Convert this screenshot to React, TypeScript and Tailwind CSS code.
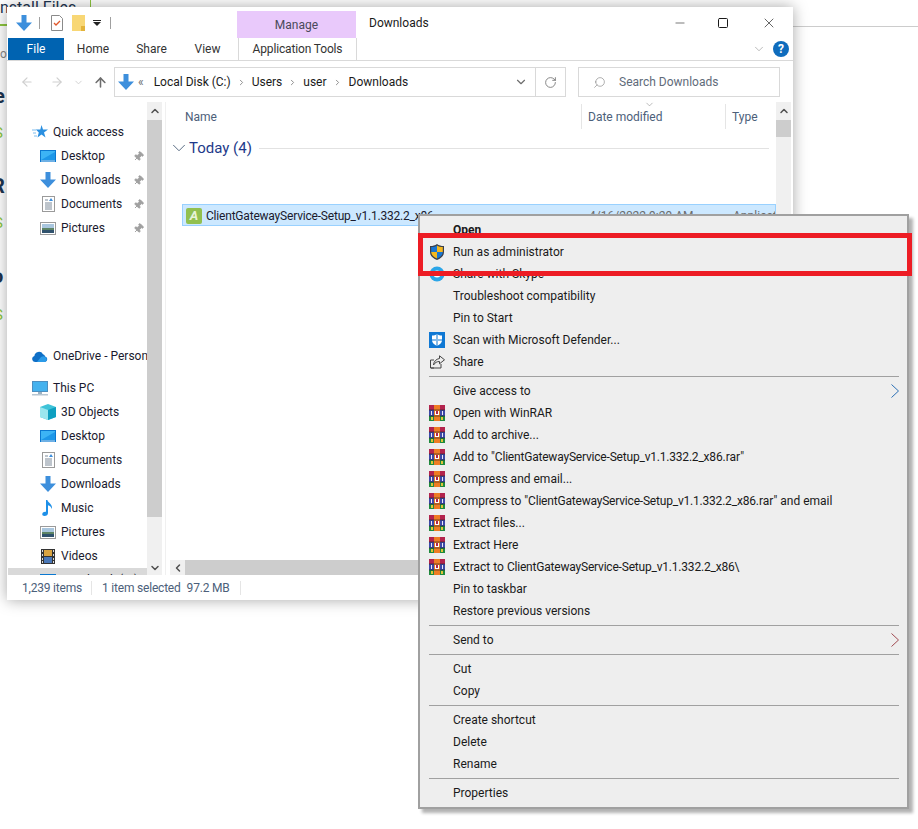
import { ChevronDown, ChevronRight, ChevronUp, ChevronLeft, Search, RotateCw, ArrowLeft, ArrowRight, ArrowUp, Pin, Minus, Square, X } from 'lucide-react'

function DownArrow({ size = 16 }: { size?: number }) {
  return (
    <svg width={size} height={size} viewBox="0 0 16 16" className="shrink-0">
      <path d="M5.5 0h5v7.5H16L8 16 0 7.5h5.5z" fill="#3d8fdc" />
    </svg>
  )
}

function DesktopIcon() {
  return (
    <svg width="16" height="12" viewBox="0 0 16 12">
      <rect width="16" height="12" fill="#0b78d0" />
      <rect x="1" y="1" width="14" height="9" fill="#3cb4f5" />
      <path d="M1 10L15 2v8z" fill="#1d97e8" />
      <rect x="1" y="10.5" width="14" height="1" fill="#cfe8fa" />
    </svg>
  )
}

function DocIcon() {
  return (
    <svg width="13" height="16" viewBox="0 0 13 16">
      <rect x=".5" y=".5" width="12" height="15" fill="#fff" stroke="#9a9a9a" />
      <path d="M3 4h3M3 7h7M3 9h7M3 11h7M3 13h7" stroke="#7d8a99" />
      <path d="M7 5l2-3 2 3z" fill="#3d8fdc" />
    </svg>
  )
}

function PicIcon() {
  return (
    <svg width="16" height="13" viewBox="0 0 16 13">
      <rect x=".5" y=".5" width="15" height="12" fill="#fff" stroke="#9a9a9a" />
      <rect x="2" y="2" width="12" height="4" fill="#a9c6de" />
      <rect x="2" y="6" width="12" height="5" fill="#5d8465" />
      <path d="M2 8h12v3H2z" fill="#30526d" />
    </svg>
  )
}

function CloudIcon() {
  return (
    <svg width="16" height="11" viewBox="0 0 16 11">
      <path d="M3 11a3 3 0 0 1-.6-5.9A4.6 4.6 0 0 1 11 3.2a3.6 3.6 0 0 1 2.2 2.2A2.9 2.9 0 0 1 13 11z" fill="#0f6fc6" />
      <path d="M5 11l4-5c2-1.4 3.5-.8 4.3-.1A2.8 2.8 0 0 1 13 11z" fill="#2b9be8" />
    </svg>
  )
}

function PcIcon() {
  return (
    <svg width="16" height="15" viewBox="0 0 16 15">
      <rect x=".5" y=".5" width="15" height="10" fill="#45b2ee" stroke="#4d8fc0" />
      <rect x="6" y="11" width="4" height="2" fill="#9db3c4" />
      <rect y="13" width="16" height="1.5" fill="#b7c6d2" />
    </svg>
  )
}

function CubeIcon() {
  return (
    <svg width="16" height="16" viewBox="0 0 16 16">
      <path d="M8 0l8 3v10l-8 3-8-3V3z" fill="#3fc3d8" />
      <path d="M8 6l8-3v10l-8 3z" fill="#0e9fc0" />
      <path d="M0 3l8 3v10l-8-3z" fill="#9ae6ee" />
    </svg>
  )
}

function MusicIcon() {
  return (
    <svg width="12" height="16" viewBox="0 0 12 16">
      <path d="M4 0h1.4c.5 3 5.6 4 4.4 9-.4-2-2-3.400-3.800-3.800V13c0 1.800-1.500 3-3.500 3S0 15 .4 13.500C.800 12 2.500 11.300 4 11.800z" fill="#1e90e8" />
    </svg>
  )
}

function VideoIcon() {
  return (
    <svg width="14" height="15" viewBox="0 0 14 15">
      <rect width="14" height="15" fill="#333" />
      <rect x="3" y="1" width="8" height="6" fill="#d9a441" />
      <rect x="3" y="8" width="8" height="6" fill="#4a78b8" />
      <path d="M1 1h1v2H1zM1 5h1v2H1zM1 9h1v2H1zM1 12h1v2H1zM12 1h1v2h-1zM12 5h1v2h-1zM12 9h1v2h-1zM12 12h1v2h-1z" fill="#ddd" />
    </svg>
  )
}

function StarIcon() {
  return (
    <svg width="16" height="14" viewBox="0 0 16 14">
      <path d="M9.500 0l1.500 4.500h5L12 7.500l1.500 5-4-3-4 3 1.300-5-3-3h4.500z" fill="#2a8fe0" />
      <path d="M0 5h4M1 8h3M2 11h3" stroke="#7fbdee" />
    </svg>
  )
}

function ShieldIcon() {
  return (
    <svg width="16" height="16" viewBox="0 0 16 16">
      <path d="M8 0c2 1.500 4 2 7 2v6c0 4-3 6.500-7 8-4-1.500-7-4-7-8V2c3 0 5-.5 7-2z" fill="#3a3f4a" />
      <path d="M8 1.500V8H2.200V3C4.500 3 6.400 2.500 8 1.500z" fill="#1976d2" />
      <path d="M8 1.500C9.600 2.500 11.500 3 13.800 3v5H8z" fill="#f5b81f" />
      <path d="M2.200 8H8v6.500C5 13.300 2.500 11.500 2.200 8z" fill="#f5b81f" />
      <path d="M8 8h5.800c-.3 3.500-2.800 5.300-5.800 6.500z" fill="#1976d2" />
    </svg>
  )
}

function SkypeIcon() {
  return (
    <svg width="16" height="16" viewBox="0 0 16 16">
      <circle cx="8" cy="8" r="7.500" fill="#2ba6e8" />
      <circle cx="8" cy="8" r="3.500" fill="#fff" />
    </svg>
  )
}

function DefenderIcon() {
  return (
    <svg width="16" height="16" viewBox="0 0 16 16">
      <rect width="16" height="16" fill="#0f78d4" />
      <path d="M8 2c1.500 1 3 1.500 5 1.500V8c0 3-2 4.500-5 6-3-1.500-5-3-5-6V3.500C5 3.500 6.500 3 8 2z" fill="#fff" />
      <path d="M7.500 2v12.500h1V2zM2.500 7.500h11v1h-11z" fill="#0f78d4" />
    </svg>
  )
}

function ShareIcon() {
  return (
    <svg width="15" height="14" viewBox="0 0 15 14" fill="none" stroke="#444" strokeWidth="1">
      <path d="M4 13H.5V5H4M1 13h10V9" />
      <path d="M9.500.8l5 4-5 4V6.500C7 6.500 5 7.500 3.500 10c.3-3.500 2.500-6 6-6.500z" />
    </svg>
  )
}

function RarIcon() {
  return (
    <svg width="16" height="16" viewBox="0 0 16 16" className="shrink-0">
      <rect width="16" height="5" fill="#b3234d" />
      <rect y="5" width="16" height="6" fill="#3d49a8" />
      <rect y="11" width="16" height="5" fill="#1f8a3d" />
      <rect x="5" width="6" height="16" fill="#ee7c24" />
      <rect x="6" y="6" width="4" height="4" fill="#fff" />
      <rect x="7" y="6" width="2" height="3" fill="#b3234d" />
      <path d="M0 5h16M0 11h16" stroke="#222" strokeWidth=".6" />
      <path d="M2 6h1v4H2zM13 6h1v4h-1z" fill="#e8e8f5" />
      <path d="M2 12h2v3H2zM12 12h2v3h-2z" fill="#e2c33a" />
    </svg>
  )
}

function MenuArrow({ color }: { color: string }) {
  return (
    <svg width="8" height="14" viewBox="0 0 8 14" fill="none" stroke={color} className="shrink-0">
      <path d="M.5.5l7 6.500-7 6.500" />
    </svg>
  )
}

// the file name runs narrower than the Roboto default
function FileName() {
  return <span className="tracking-[-0.2px]">ClientGatewayService-Setup_v1.1.332.2_x86</span>
}

type NavRow = { label: string; icon: React.ReactNode; pinned?: boolean; top?: boolean }

const quickRows: NavRow[] = [
  { label: 'Quick access', icon: <StarIcon />, top: true },
  { label: 'Desktop', icon: <DesktopIcon />, pinned: true },
  { label: 'Downloads', icon: <DownArrow />, pinned: true },
  { label: 'Documents', icon: <DocIcon />, pinned: true },
  { label: 'Pictures', icon: <PicIcon />, pinned: true },
]

const pcRows: NavRow[] = [
  { label: '3D Objects', icon: <CubeIcon /> },
  { label: 'Desktop', icon: <DesktopIcon /> },
  { label: 'Documents', icon: <DocIcon /> },
  { label: 'Downloads', icon: <DownArrow /> },
  { label: 'Music', icon: <MusicIcon /> },
  { label: 'Pictures', icon: <PicIcon /> },
  { label: 'Videos', icon: <VideoIcon /> },
]

function SideRow({ label, icon, pinned, top }: NavRow) {
  return (
    <div className={`flex h-6 items-center ${top ? 'pl-[24px]' : 'pl-[32px]'}`}>
      <span className="flex w-[16px] shrink-0 items-center justify-center">{icon}</span>
      <span className="ml-[5px] grow whitespace-nowrap text-[#1a1a2e]">{label}</span>
      {pinned && <Pin size={11} className="mr-[3px] rotate-45 fill-[#a0a0a0] text-[#a0a0a0]" />}
    </div>
  )
}

type MenuItem = { label?: React.ReactNode; icon?: React.ReactNode; bold?: boolean; arrow?: string; sep?: boolean }

const menuItems: MenuItem[] = [
  { label: 'Open', bold: true },
  { label: 'Run as administrator', icon: <ShieldIcon /> },
  { label: 'Share with Skype', icon: <SkypeIcon /> },
  { label: 'Troubleshoot compatibility' },
  { label: 'Pin to Start' },
  { label: 'Scan with Microsoft Defender...', icon: <DefenderIcon /> },
  { label: 'Share', icon: <ShareIcon /> },
  { sep: true },
  { label: 'Give access to', arrow: '#2a6fb5' },
  { label: 'Open with WinRAR', icon: <RarIcon /> },
  { label: 'Add to archive...', icon: <RarIcon /> },
  { label: <>Add to "<FileName />.rar"</>, icon: <RarIcon /> },
  { label: 'Compress and email...', icon: <RarIcon /> },
  { label: <>Compress to "<FileName />.rar" and email</>, icon: <RarIcon /> },
  { label: 'Extract files...', icon: <RarIcon /> },
  { label: 'Extract Here', icon: <RarIcon /> },
  { label: <>Extract to <FileName />\</>, icon: <RarIcon /> },
  { label: 'Pin to taskbar' },
  { label: 'Restore previous versions' },
  { sep: true },
  { label: 'Send to', arrow: '#a04a50' },
  { sep: true },
  { label: 'Cut' },
  { label: 'Copy' },
  { sep: true },
  { label: 'Create shortcut' },
  { label: 'Delete' },
  { label: 'Rename' },
  { sep: true },
  { label: 'Properties' },
]

function ContextMenu() {
  return (
    <div className="absolute left-[418px] top-[214px] w-[491px] border-2 border-[#a0a0a0] bg-[#eeeeee] pb-[3px] pr-[8px] pt-[3px] shadow-[4px_4px_3px_rgba(0,0,0,0.3)]">
      {menuItems.map((item, i) =>
        item.sep ? (
          <div key={i} className="ml-[9px] flex h-[7px] items-center">
            <div className="h-px w-full bg-[#a0a0a0]" />
          </div>
        ) : (
          <div key={i} className="flex h-[22px] items-center text-[#1a1a1a]">
            <span className="flex w-[33px] shrink-0 items-center justify-center pl-[1px]">{item.icon}</span>
            <span className={`grow whitespace-nowrap ${item.bold ? 'font-bold' : ''}`}>{item.label}</span>
            {item.arrow && <MenuArrow color={item.arrow} />}
          </div>
        ),
      )}
    </div>
  )
}

function ExplorerWindow() {
  return (
    <div className="absolute left-[7px] top-[7px] flex h-[593px] w-[786px] flex-col bg-white shadow-[0_0_14px_rgba(0,0,0,0.35)]">
      {/* title bar */}
      <div className="flex h-[31px] shrink-0 items-end">
        <div className="flex h-[31px] w-[230px] items-center pl-[9px]">
          <DownArrow />
          <div className="ml-[7px] h-[12px] w-px bg-[#a0a0a0]" />
          <svg width="12" height="16" viewBox="0 0 12 16" className="ml-[11px]">
            <path d="M.5.5h8l3 3v12H.5z" fill="#fff" stroke="#8a8a8a" />
            <path d="M3 8l2 2 4-4" fill="none" stroke="#e0572a" strokeWidth="1.300" />
          </svg>
          <svg width="13" height="16" viewBox="0 0 13 16" className="ml-[9px]">
            <rect width="13" height="16" fill="#f8d775" />
            <rect x="9" y="11" width="4" height="5" fill="#e3b33a" />
          </svg>
          <svg width="8" height="6" viewBox="0 0 8 6" className="ml-[8px]">
            <path d="M0 0h8v1H0zM0 2h8L4 6z" fill="#222" />
          </svg>
          <div className="ml-[9px] h-[12px] w-px bg-[#a0a0a0]" />
        </div>
        <div className="flex h-[27px] w-[119px] items-center justify-center bg-[#e9c9fb] text-[#4a4a5a]">Manage</div>
        <div className="ml-[13px] h-[31px] grow pt-[7px] text-[#1a1a1a]">Downloads</div>
        <div className="flex h-[31px] items-center text-[#1a1a1a]">
          <Minus size={14} strokeWidth={1} className="mr-[30px]" />
          <Square size={12} strokeWidth={1} absoluteStrokeWidth className="mr-[32px]" />
          <X size={16} strokeWidth={1} className="mr-[16px]" />
        </div>
      </div>

      {/* ribbon tabs */}
      <div className="flex h-[23px] shrink-0 items-stretch border-b border-[#d9d9d9]">
        <div className="ml-px flex w-[56px] items-center justify-center bg-[#0063b1] text-white">File</div>
        <div className="flex w-[58px] items-center justify-center text-[#333]">Home</div>
        <div className="flex w-[58px] items-center justify-center pl-[1px] text-[#333]">Share</div>
        <div className="flex w-[54px] items-center justify-center pl-[1px] text-[#333]">View</div>
        <div className="ml-[4px] flex w-[119px] items-center justify-center border-x border-[#d9d9d9] tracking-[-0.15px] text-[#333]">Application Tools</div>
        <div className="flex grow items-center justify-end pr-[4px]">
          <ChevronDown size={14} strokeWidth={1} className="mr-[7px] text-[#8a8a8a]" />
          <div className="flex size-[16px] items-center justify-center rounded-full bg-[#0f6cbd] text-[12px] font-bold leading-none text-white">?</div>
        </div>
      </div>

      {/* address row */}
      <div className="flex h-[41px] shrink-0 items-start pt-[6px]">
        <div className="flex h-[30px] w-[107px] items-center pl-[13px]">
          <ArrowLeft size={14} className="text-[#cfcfcf]" />
          <ArrowRight size={14} className="ml-[16px] text-[#cfcfcf]" />
          <ChevronDown size={11} className="ml-[9px] text-[#cfcfcf]" />
          <ArrowUp size={15} strokeWidth={2.500} className="ml-[9px] text-[#6e6e6e]" />
        </div>
        <div className="flex h-[30px] w-[452px] items-center border border-[#d9d9d9]">
          <span className="ml-[3px]"><DownArrow /></span>
          <span className="ml-[4px] text-[#6e6e6e]">«</span>
          <span className="ml-[10px] text-[#1a1a1a]">Local Disk (C:)</span>
          <ChevronRight size={9} strokeWidth={2.500} className="mx-[6px] text-[#8a8a8a]" />
          <span className="text-[#1a1a1a]">Users</span>
          <ChevronRight size={9} strokeWidth={2.500} className="mx-[6px] text-[#8a8a8a]" />
          <span className="text-[#1a1a1a]">user</span>
          <ChevronRight size={9} strokeWidth={2.500} className="ml-[6px] mr-[7px] text-[#8a8a8a]" />
          <span className="grow text-[#1a1a1a]">Downloads</span>
          <ChevronDown size={14} strokeWidth={2} className="mr-[7px] text-[#6e6e6e]" />
          <div className="flex h-full w-[30px] items-center justify-center border-l border-[#d9d9d9]">
            <RotateCw size={13} strokeWidth={1.500} className="text-[#6e6e6e]" />
          </div>
        </div>
        <div className="ml-[12px] flex h-[30px] w-[202px] items-center border border-[#d9d9d9] pl-[14px] text-[#5f6b7a]">
          <Search size={13} strokeWidth={1} className="-scale-x-100 text-[#6e6e6e]" />
          <span className="ml-[13px]">Search Downloads</span>
        </div>
      </div>

      {/* body */}
      <div className="flex min-h-0 grow overflow-hidden">
        <div className="w-[140px] shrink-0 overflow-hidden pl-px pt-[18px]">
          {quickRows.map((r) => (
            <SideRow key={r.label} {...r} />
          ))}
          <div className="h-[104px]" />
          <SideRow label="OneDrive - Personal" icon={<CloudIcon />} top />
          <div className="h-2" />
          <SideRow label="This PC" icon={<PcIcon />} top />
          {pcRows.map((r) => (
            <SideRow key={r.label + 'pc'} {...r} />
          ))}
          <div className="h-6 bg-[#d9d9d9]">
            <SideRow label="Local Disk (C:)" icon={<DesktopIcon />} />
          </div>
        </div>

        <div className="flex w-[15px] shrink-0 flex-col bg-[#f0f0f0]">
          <div className="flex h-[18px] shrink-0 items-center justify-center"><ChevronUp size={12} strokeWidth={3} className="text-[#505050]" /></div>
          <div className="h-[397px] shrink-0 bg-[#cdcdcd]" />
          <div className="grow" />
          <div className="flex h-[15px] items-center justify-center"><ChevronDown size={12} strokeWidth={3} className="text-[#505050]" /></div>
        </div>

        <div className="ml-[3px] flex min-w-0 grow flex-col border-l border-[#f0f0f0]">
          <div className="flex min-h-0 grow">
            <div className="min-w-0 grow">
              <div className="relative flex h-[27px] items-center pt-[2px] text-[#4c607a]">
                <span className="ml-[19px] w-[396px]">Name</span>
                <div className="flex h-[25px] w-[144px] items-center border-l border-[#e5e5e5] pl-[6px]">Date modified</div>
                <div className="flex h-[25px] items-center border-l border-[#e5e5e5] pl-[6px]">Type</div>
                <ChevronDown size={11} strokeWidth={1} className="absolute left-[478px] top-[-3px] text-[#6e6e6e]" />
              </div>
              <div className="mt-[8px] flex h-[22px] items-center pl-[7px] pr-[7px]">
                <ChevronDown size={22} strokeWidth={1} className="-ml-[5px] -mr-[3px] shrink-0 text-[#4c607a]" />
                <span className="ml-[2px] text-[15px] text-[#1e3a8a]">Today (4)</span>
                <div className="ml-[7px] h-px grow bg-[#e2e2e2]" />
              </div>
              <div className="ml-[16px] mt-[45px] flex h-[22px] items-center overflow-hidden border border-[#99d1ff] bg-[#cce8ff] pl-[3px] pt-px">
                <div className="flex size-[16px] shrink-0 items-center justify-center rounded-[2px] bg-[#92c050] text-[13px] font-bold italic leading-none text-[#e8f3d8]">A</div>
                <span className="ml-[4px] w-[383px] shrink-0 whitespace-nowrap text-[#1a1a2e]"><FileName /></span>
                <span className="w-[144px] shrink-0 whitespace-nowrap text-[#6d6d6d]">4/16/2022 9:29 AM</span>
                <span className="shrink-0 text-[#6d6d6d]">Application</span>
              </div>
            </div>
            <div className="flex w-[15px] shrink-0 flex-col bg-[#f0f0f0]">
              <div className="flex h-[18px] items-center justify-center"><ChevronUp size={12} strokeWidth={3} className="text-[#505050]" /></div>
              <div className="h-[17px] bg-[#cdcdcd]" />
            </div>
            <div className="w-[2px] shrink-0" />
          </div>
          <div className="flex h-[15px] shrink-0 pl-[4px] pr-[2px]">
            <div className="flex w-[15px] items-center justify-center bg-[#f0f0f0]"><ChevronLeft size={12} strokeWidth={3} className="text-[#505050]" /></div>
            <div className="grow bg-[#cdcdcd]" />
          </div>
        </div>
      </div>

      {/* status bar */}
      <div className="flex h-[25px] shrink-0 items-center whitespace-nowrap bg-white tracking-[-0.2px] text-[#4c607a]">
        <span className="ml-[15px] w-[69px]">1,239 items</span>
        <div className="h-[14px] w-px bg-[#e5e5e5]" />
        <span className="ml-[10px]">1 item selected</span>
        <span className="ml-[6px]">97.2 MB</span>
        <div className="ml-[10px] h-[14px] w-px bg-[#e5e5e5]" />
      </div>
    </div>
  )
}

export default function App() {
  return (
    <div className="relative h-[829px] w-[918px] overflow-hidden bg-white font-['Roboto',sans-serif] text-[12px]">
      {/* page behind the window */}
      <div className="absolute left-0 top-[-4px] whitespace-nowrap text-[16px] text-[#1d3550]">nstall Files</div>
      <div className="absolute left-0 top-[24px] h-[2px] w-[8px] bg-[#8dc63f]" />
      <div className="absolute left-[90px] top-0 h-[7px] w-px bg-[#8dc63f]" />
      <div className="absolute left-[793px] top-[26px] h-px w-[125px] bg-[#cccccc]" />
      <div className="absolute left-0 top-[45px] text-[12px] text-[#888]">ov</div>
      <div className="absolute left-[-6px] top-[81px] text-[20px] font-bold text-[#1d3550]">e</div>
      <div className="absolute left-[-6px] top-[122px] text-[15px] text-[#8dc63f]">S</div>
      <div className="absolute left-[-8px] top-[171px] text-[20px] font-bold text-[#1d3550]">R</div>
      <div className="absolute left-[-6px] top-[212px] text-[15px] text-[#8dc63f]">S</div>
      <div className="absolute left-[-8px] top-[261px] text-[20px] font-bold text-[#1d3550]">o</div>
      <div className="absolute left-[-6px] top-[304px] text-[15px] text-[#8dc63f]">S</div>

      <ExplorerWindow />
      <ContextMenu />
      {/* red highlight over the menu row */}
      <div className="absolute left-[418px] top-[233px] h-[43px] w-[494px] border-[5px] border-[#ed1c24]" />
    </div>
  )
}
